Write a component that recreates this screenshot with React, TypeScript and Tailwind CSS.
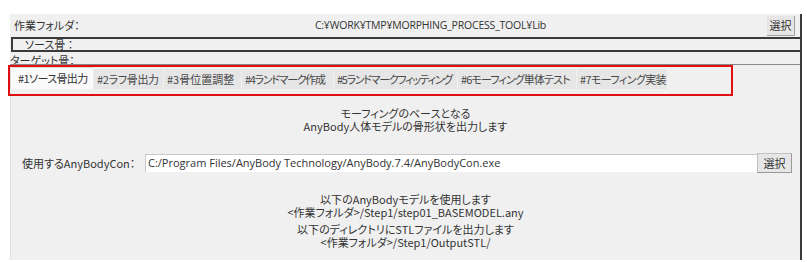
const tabs = [
  { label: "#1ソース骨出力", box: "w-[83px] pl-[7px] tracking-[-0.6px]" },
  { label: "#2ラフ骨出力", box: "w-[69px] pl-[3px] tracking-[-0.3px]" },
  { label: "#3骨位置調整", box: "w-[77px] pl-[3px] tracking-[0px]" },
  { label: "#4ランドマーク作成", box: "w-[91px] pl-[3px] tracking-[-1.3px]" },
  { label: "#5ランドマークフィッティング", box: "w-[123px] pl-[3px] tracking-[-1.3px]" },
  { label: "#6モーフィング単体テスト", box: "w-[118px] pl-[3px] tracking-[-0.9px]" },
  { label: "#7モーフィング実装", box: "w-[90px] pl-[3px] tracking-[-0.6px]" },
]

const font = "font-['Noto_Sans_CJK_JP','Noto_Sans',sans-serif] [font-feature-settings:'palt']"

const App = () => {
  return (
    <div className={`w-[807px] h-[262px] bg-white pt-[14px] pl-[10px] relative text-[#333] ${font}`}>
      <div className="w-[792px] h-[246px] bg-[#f0f0f0] border-r-2 border-[#3a3a3a] flex flex-col">
        {/* folder row */}
        <div className="h-[23px] flex items-center pl-1 pr-[5px]">
          <span className="text-[11px] w-[140px]">作業フォルダ：</span>
          <span className="flex-grow text-center text-[10.5px] font-['Open_Sans',sans-serif] pr-[60px] tracking-[-0.2px]">
            C:¥WORK¥TMP¥MORPHING_PROCESS_TOOL¥Lib
          </span>
          <button className="h-[20px] w-[28px] text-[11px] bg-[#e6e6e6] border-r border-b border-[#a0a0a0] leading-none">選択</button>
        </div>

        <div className="h-[15px] ml-[1px] border-2 border-[#3a3a3a] border-r-0 flex items-center pl-3">
          <span className="text-[11px] leading-none">ソース骨 ：</span>
        </div>
        <div className="h-[13px] overflow-hidden border-b border-[#888]">
          <span className="block text-[11px] leading-[11px] pt-[3px]">ターゲット骨：</span>
        </div>

        {/* tab strip */}
        <div className="h-[27px] flex items-end gap-[1px] pb-[3px]">
          {tabs.map((t, i) => (
            <div
              key={t.label}
              className={`${t.box} whitespace-nowrap flex items-center text-[11px] ${
                i === 0
                  ? "h-[22px] bg-[#fafafa] border-l border-t border-[#dcdcdc]"
                  : "h-[20px] bg-[#e6e6e6] text-[#484848]"
              }`}
            >
              {t.label}
            </div>
          ))}
        </div>

        {/* body */}
        <div className="flex-grow border-l border-[#e0e0e0] bg-[#f0f0f0] flex flex-col items-center">
          <div className="mt-[15px] text-[11px] leading-[13px] text-center">
            <div>モーフィングのベースとなる</div>
            <div>AnyBody人体モデルの骨形状を出力します</div>
          </div>

          <div className="w-full mt-[20px] h-[20px] flex items-center pl-[11px] pr-[8px]">
            <span className="text-[11px] w-[123px]">使用するAnyBodyCon：</span>
            <div className="flex-grow h-[18px] bg-white border-l border-t border-[#c8c8c8] flex items-center pl-[2px] text-[11px] font-['Open_Sans',sans-serif]">
              C:/Program Files/AnyBody Technology/AnyBody.7.4/AnyBodyCon.exe
            </div>
            <button className="h-[20px] w-[35px] text-[11px] bg-[#e6e6e6] border border-[#c0c0c0] border-r-[#999] border-b-[#999] leading-none">選択</button>
          </div>

          <div className="mt-[20px] text-[11px] leading-[13px] text-center">
            <div>以下のAnyBodyモデルを使用します</div>
            <div>&lt;作業フォルダ&gt;/Step1/step01_BASEMODEL.any</div>
          </div>
          <div className="mt-[4px] text-[11px] leading-[13px] text-center">
            <div>以下のディレクトリにSTLファイルを出力します</div>
            <div>&lt;作業フォルダ&gt;/Step1/OutputSTL/</div>
          </div>
        </div>
      </div>

      {/* red annotation box */}
      <div className="absolute left-[8px] top-[65px] w-[725px] h-[31px] border-2 border-[#e01010]" />
    </div>
  )
}

export default App
